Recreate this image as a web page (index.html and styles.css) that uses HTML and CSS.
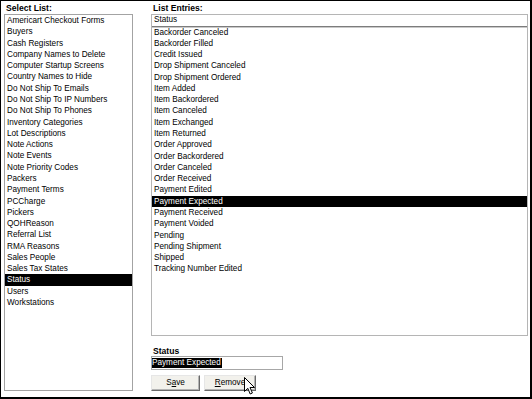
FILE: index.html
```html
<!DOCTYPE html>
<html lang="en">
<head>
    <meta charset="UTF-8">
    <title>List Maintenance</title>
    <link rel="stylesheet" href="styles.css">
</head>
<body>
    <div class="frame">
        <div class="col-left">
            <div class="lbl">Select List:</div>
            <div class="listbox lists">
                <div class="item">Americart Checkout Forms</div>
                <div class="item">Buyers</div>
                <div class="item">Cash Registers</div>
                <div class="item">Company Names to Delete</div>
                <div class="item">Computer Startup Screens</div>
                <div class="item">Country Names to Hide</div>
                <div class="item">Do Not Ship To Emails</div>
                <div class="item">Do Not Ship To IP Numbers</div>
                <div class="item">Do Not Ship To Phones</div>
                <div class="item">Inventory Categories</div>
                <div class="item">Lot Descriptions</div>
                <div class="item">Note Actions</div>
                <div class="item">Note Events</div>
                <div class="item">Note Priority Codes</div>
                <div class="item">Packers</div>
                <div class="item">Payment Terms</div>
                <div class="item">PCCharge</div>
                <div class="item">Pickers</div>
                <div class="item">QOHReason</div>
                <div class="item">Referral List</div>
                <div class="item">RMA Reasons</div>
                <div class="item">Sales People</div>
                <div class="item">Sales Tax States</div>
                <div class="item selected">Status</div>
                <div class="item">Users</div>
                <div class="item">Workstations</div>
            </div>
        </div>
        <div class="col-right">
            <div class="lbl">List Entries:</div>
            <div class="listbox entries">
                <div class="col-head">Status</div>
                <div class="item">Backorder Canceled</div>
                <div class="item">Backorder Filled</div>
                <div class="item">Credit Issued</div>
                <div class="item">Drop Shipment Canceled</div>
                <div class="item">Drop Shipment Ordered</div>
                <div class="item">Item Added</div>
                <div class="item">Item Backordered</div>
                <div class="item">Item Canceled</div>
                <div class="item">Item Exchanged</div>
                <div class="item">Item Returned</div>
                <div class="item">Order Approved</div>
                <div class="item">Order Backordered</div>
                <div class="item">Order Canceled</div>
                <div class="item">Order Received</div>
                <div class="item">Payment Edited</div>
                <div class="item selected">Payment Expected</div>
                <div class="item">Payment Received</div>
                <div class="item">Payment Voided</div>
                <div class="item">Pending</div>
                <div class="item">Pending Shipment</div>
                <div class="item">Shipped</div>
                <div class="item">Tracking Number Edited</div>
            </div>
            <div class="lbl edit-lbl">Status</div>
            <div class="textbox"><span class="sel">Payment Expected</span></div>
            <div class="buttons">
                <div class="btn save">S<u>a</u>ve</div>
                <div class="btn remove"><u>R</u>emove</div>
            </div>
        </div>
        <svg class="cursor" width="12" height="20" viewBox="0 0 12 20">
            <path d="M0.5 0.5 L0.5 14.5 L3.8 11.3 L6.2 17 L8.4 16 L6 10.5 L10.5 10.5 Z" fill="#fff" stroke="#000" stroke-width="1"/>
        </svg>
    </div>
</body>
</html>
```

FILE: styles.css
```css
body {
    margin: 0;
    font-family: "Liberation Sans", Arial, sans-serif;
    font-size: 8.2px;
    color: #000;
}
.frame {
    position: relative;
    width: 532px;
    height: 399px;
    box-sizing: border-box;
    border: 1px solid #000;
    border-right-width: 2px;
    border-bottom-width: 2px;
    background: #fff;
    padding: 2px 2px 0 3px;
    display: flex;
    gap: 18px;
    overflow: hidden;
}
.col-left {
    width: 129px;
    display: flex;
    flex-direction: column;
}
.col-right {
    width: 377px;
    display: flex;
    flex-direction: column;
}
.lbl {
    font-weight: bold;
    font-size: 8.6px;
    line-height: 11px;
    padding-left: 2px;
}
.listbox {
    box-sizing: border-box;
    border: 1px solid #a3a3a3;
    background: #fff;
}
.lists {
    height: 377px;
}
.entries {
    height: 322px;
    border-color: #b5b5b5;
}
.item {
    line-height: 11.28px;
    padding-left: 2px;
    white-space: nowrap;
}
.item.selected {
    background: #000;
    color: #fff;
}
.col-head {
    height: 10.5px;
    line-height: 10.5px;
    padding-left: 2px;
    border-bottom: 1px solid #7c7c7c;
    box-shadow: 0 1px 0 #c9c9c9;
}
.edit-lbl {
    margin-top: 10px;
    line-height: 10px;
}
.textbox {
    box-sizing: border-box;
    width: 132px;
    height: 14px;
    border: 1px solid #a7a7a7;
    padding: 1px 0 0 0;
}
.sel {
    display: inline-block;
    background: #000;
    color: #fff;
    line-height: 10px;
    padding-right: 1px;
}
.buttons {
    display: flex;
    gap: 4px;
    margin-top: 5px;
}
.btn {
    box-sizing: border-box;
    height: 16px;
    line-height: 14px;
    text-align: center;
    background: #f2f1ec;
    border: 1px solid;
    border-color: #e6e6e6 #6a6a6a #6a6a6a #e6e6e6;
    box-shadow: inset -1px -1px 0 #b4b4b4;
}
.save {
    width: 49px;
}
.remove {
    width: 52px;
}
.cursor {
    position: absolute;
    left: 243px;
    top: 376px;
}
```
